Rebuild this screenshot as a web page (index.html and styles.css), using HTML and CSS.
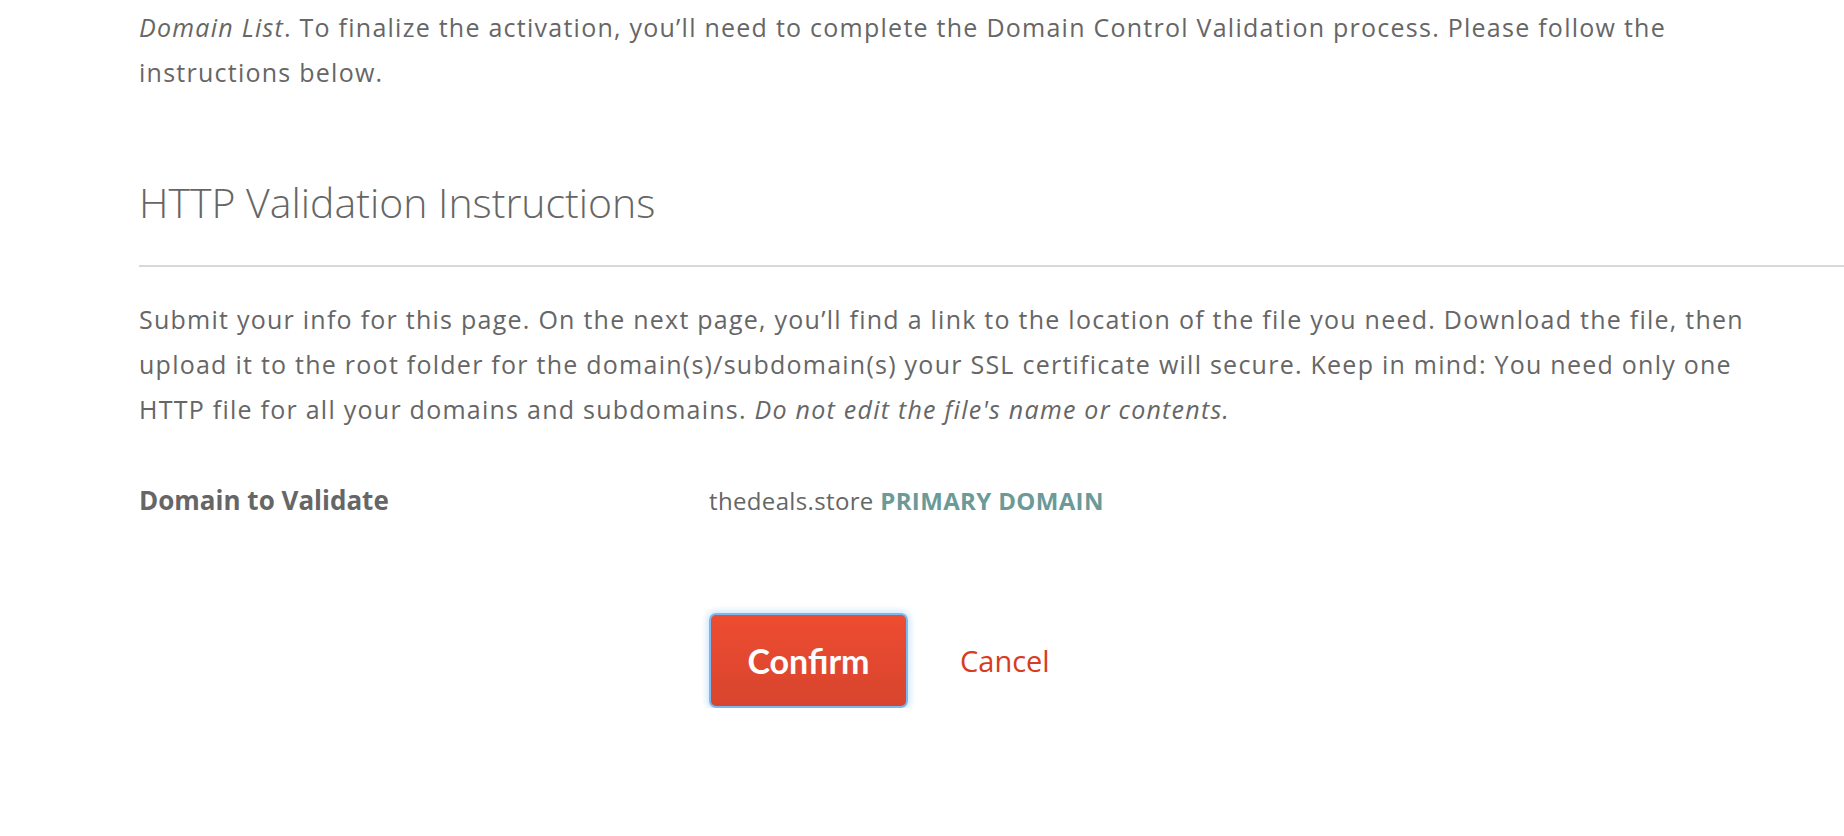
FILE: index.html
```html
<!DOCTYPE html>
<html>
<head>
<meta charset="utf-8">
<link rel="stylesheet" href="styles.css">
</head>
<body>
<div class="page">
  <p class="intro"><em>Domain List</em>. To finalize the activation, you’ll need to complete the Domain Control Validation process. Please follow the instructions below.</p>
  <section class="section">
    <h2 class="section-title">HTTP Validation Instructions</h2>
    <hr class="divider">
    <p class="desc">Submit your info for this page. On the next page, you’ll find a link to the location of the file you need. Download the file, then upload it to the root folder for the domain(s)/subdomain(s) your SSL certificate will secure. Keep in mind: You need only one HTTP file for all your domains and subdomains. <em>Do not edit the file's name or contents.</em></p>
    <div class="field-row">
      <div class="field-label">Domain to Validate</div>
      <div class="field-value">thedeals.store <span class="tag">PRIMARY DOMAIN</span></div>
    </div>
    <div class="actions">
      <button class="btn-confirm">Confirm</button>
      <a class="cancel-link" href="#">Cancel</a>
    </div>
  </section>
</div>
</body>
</html>
```
FILE: styles.css
```css
html, body {
  margin: 0;
  padding: 0;
  background: #fff;
}
body {
  font-family: "Open Sans", "Lato", sans-serif;
  color: #666;
}
.page {
  padding-left: 139px;
  padding-top: 5px;
}
.intro {
  margin: 0;
  width: 1620px;
  font-size: 25px;
  letter-spacing: 1.25px;
  line-height: 45px;
}
.section {
  margin-top: 82px;
}
.section-title {
  margin: 0;
  font-weight: 300;
  font-size: 41px;
  line-height: 50px;
  color: #666;
}
.divider {
  border: 0;
  height: 2px;
  background: #d8d8d8;
  margin: 38px 0 0 0;
}
.desc {
  margin: 30px 0 0 0;
  width: 1620px;
  font-size: 25px;
  letter-spacing: 1.25px;
  line-height: 45px;
}
.field-row {
  display: flex;
  align-items: baseline;
  margin-top: 48px;
  line-height: 40px;
}
.field-label {
  width: 570px;
  font-weight: 700;
  font-size: 26px;
}
.field-value {
  font-size: 24px;
  letter-spacing: 0.35px;
}
.tag {
  color: #6b9a98;
  font-weight: 700;
}
.actions {
  display: flex;
  align-items: center;
  margin-top: 92px;
  padding-left: 570px;
  gap: 52px;
}
.btn-confirm {
  width: 199px;
  height: 95px;
  border: 2px solid #7bb8ef;
  border-radius: 7px;
  background: linear-gradient(#ed4c30, #d8452e);
  color: #fff;
  font-family: "Lato", "Open Sans", sans-serif;
  font-weight: 700;
  font-size: 34px;
  box-shadow: 0 0 6px 2px rgba(140, 195, 245, 0.45);
  cursor: pointer;
}
.cancel-link {
  color: #d93a22;
  text-decoration: none;
  font-size: 29px;
}
```
